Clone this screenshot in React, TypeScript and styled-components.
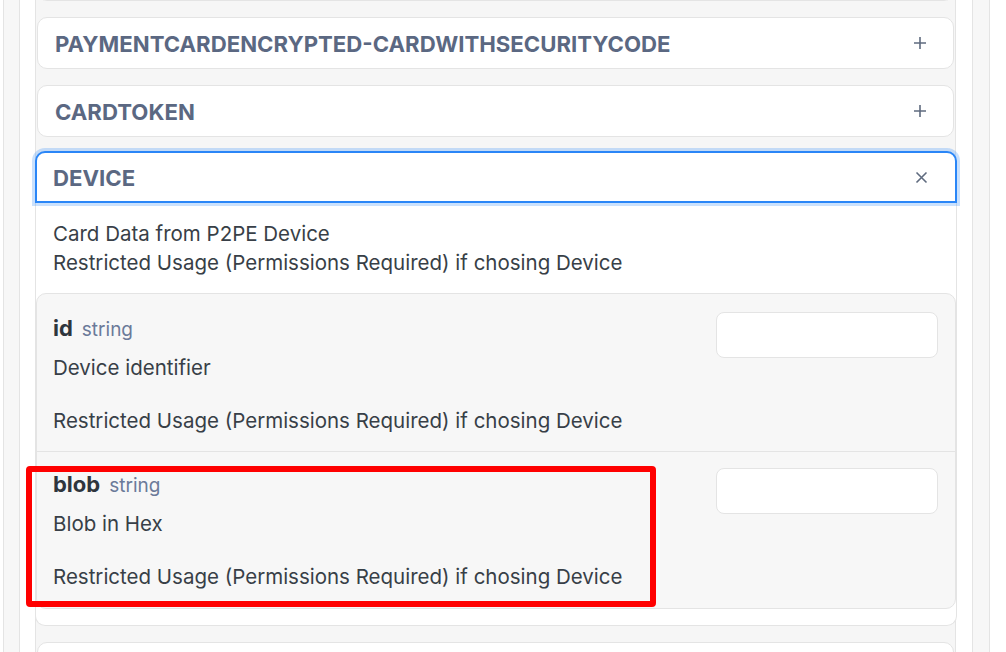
import React, { FC } from 'react';
import styled, { createGlobalStyle } from 'styled-components';

const GlobalStyle = createGlobalStyle`
  html, body {
    margin: 0;
    padding: 0;
    background: #ffffff;
    height: 652px;
    overflow: hidden;
  }
  body {
    font-family: Inter, 'Liberation Sans', sans-serif;
    color: #383f47;
  }
`;

const Frame = styled.div`
  height: 652px;
  box-sizing: border-box;
  margin: 0 16px 0 3px;
  padding: 0 16px 0 15px;
  background: #f7f7f7;
  border-left: 1px solid #e4e4e4;
  border-right: 1px solid #e4e4e4;
  overflow: hidden;
`;

const Panel = styled.div`
  height: 100%;
  box-sizing: border-box;
  display: flex;
  flex-direction: column;
  padding: 0 16px 0 15px;
  background: #ffffff;
  border-left: 1px solid #e4e4e4;
  border-right: 1px solid #e4e4e4;
  overflow: hidden;
`;

const List = styled.div`
  margin-top: -51px;
  flex: 1 0 auto;
  box-sizing: border-box;
  display: flex;
  flex-direction: column;
  gap: 16px;
  background: #f6f6f6;
  border-left: 1px solid #e4e4e4;
  border-right: 1px solid #e4e4e4;
`;

const Card = styled.div`
  margin: 0 1px;
  height: 52px;
  box-sizing: border-box;
  display: flex;
  align-items: center;
  justify-content: space-between;
  padding: 0 26px 0 17px;
  background: #ffffff;
  border: 1px solid #e4e4e4;
  border-radius: 10px;
  flex-shrink: 0;
`;

const Title = styled.span`
  font-size: 22.2px;
  font-weight: 700;
  color: #5b6882;
  white-space: nowrap;
`;

const Expanded = styled.div`
  margin: -2px -2px 0 -1px;
  display: flex;
  flex-direction: column;
  flex-shrink: 0;
`;

const ExpandedHeader = styled.div`
  position: relative;
  z-index: 1;
  height: 52px;
  box-sizing: border-box;
  display: flex;
  align-items: center;
  justify-content: space-between;
  padding: 0 27px 0 16px;
  background: #ffffff;
  border: 2px solid #2a86f7;
  border-radius: 10px 10px 0 0;
  box-shadow: 0 0 0 3px rgba(42, 134, 247, 0.25);
`;

const Body = styled.div`
  padding: 16px 0 16px;
  background: #ffffff;
  border: 1px solid #e4e4e4;
  border-top: none;
  border-radius: 0 0 10px 10px;
`;

const Intro = styled.div`
  padding: 0 17px;
  font-size: 20.5px;
  line-height: 29px;
  margin-bottom: 16px;
`;

const Fields = styled.div`
  background: #f7f7f7;
  border: 1px solid #e4e4e4;
  border-radius: 10px;
`;

const FieldRow = styled.div<{ first?: boolean }>`
  position: relative;
  display: flex;
  justify-content: space-between;
  align-items: flex-start;
  padding: ${(p) => (p.first ? '19px 17px 16px 16px' : '17px 17px 18px 16px')};
  border-top: ${(p) => (p.first ? 'none' : '1px solid #e4e4e4')};
`;

const FieldInfo = styled.div`
  display: flex;
  flex-direction: column;
`;

const NameLine = styled.div`
  display: flex;
  align-items: baseline;
  gap: 9px;
  line-height: 30px;
`;

const FieldName = styled.span`
  font-size: 22px;
  font-weight: 700;
  color: #2f353d;
`;

const FieldType = styled.span`
  font-size: 19px;
  color: #6b7a99;
`;

const Description = styled.div`
  margin-top: 10px;
  font-size: 20.5px;
  line-height: 26.5px;
  white-space: pre-line;
`;

const Input = styled.input`
  margin-top: -1px;
  width: 222px;
  height: 46px;
  box-sizing: border-box;
  background: #ffffff;
  border: 1px solid #e4e4e4;
  border-radius: 8px;
  outline: none;
`;

const Annotation = styled.div`
  position: absolute;
  left: -11px;
  top: 14px;
  width: 630px;
  height: 141px;
  box-sizing: border-box;
  border: 6px solid #ff0000;
  border-radius: 4px;
  pointer-events: none;
`;

const PlusIcon: FC = () => (
  <svg width="14" height="14" viewBox="0 0 14 14" fill="none">
    <path d="M7 1v12M1 7h12" stroke="#5f6b7f" strokeWidth="1.6" />
  </svg>
);

const CloseIcon: FC = () => (
  <svg width="13" height="13" viewBox="0 0 13 13" fill="none">
    <path d="M1.5 1.5l10 10M11.5 1.5l-10 10" stroke="#5f6b7f" strokeWidth="1.6" />
  </svg>
);

type Field = { name: string; type: string; description: string; marked?: boolean };

const fields: Field[] = [
  {
    name: 'id',
    type: 'string',
    description: 'Device identifier\n\nRestricted Usage (Permissions Required) if chosing Device',
  },
  {
    name: 'blob',
    type: 'string',
    description: 'Blob in Hex\n\nRestricted Usage (Permissions Required) if chosing Device',
    marked: true,
  },
];

const App: FC = () => (
  <>
    <GlobalStyle />
    <Frame>
      <Panel>
        <List>
          {/* card scrolled above the viewport: only its bottom edge shows */}
          <Card />
          <Card>
            <Title>PAYMENTCARDENCRYPTED-CARDWITHSECURITYCODE</Title>
            <PlusIcon />
          </Card>
          <Card>
            <Title>CARDTOKEN</Title>
            <PlusIcon />
          </Card>
          <Expanded>
            <ExpandedHeader>
              <Title>DEVICE</Title>
              <CloseIcon />
            </ExpandedHeader>
            <Body>
              <Intro>
                Card Data from P2PE Device
                <br />
                Restricted Usage (Permissions Required) if chosing Device
              </Intro>
              <Fields>
                {fields.map((f, i) => (
                  <FieldRow key={f.name} first={i === 0}>
                    <FieldInfo>
                      <NameLine>
                        <FieldName>{f.name}</FieldName>
                        <FieldType>{f.type}</FieldType>
                      </NameLine>
                      <Description>{f.description}</Description>
                    </FieldInfo>
                    <Input type="text" />
                    {f.marked && <Annotation />}
                  </FieldRow>
                ))}
              </Fields>
            </Body>
          </Expanded>
          {/* next card, only its top edge is in view */}
          <Card />
        </List>
      </Panel>
    </Frame>
  </>
);

export default App;
